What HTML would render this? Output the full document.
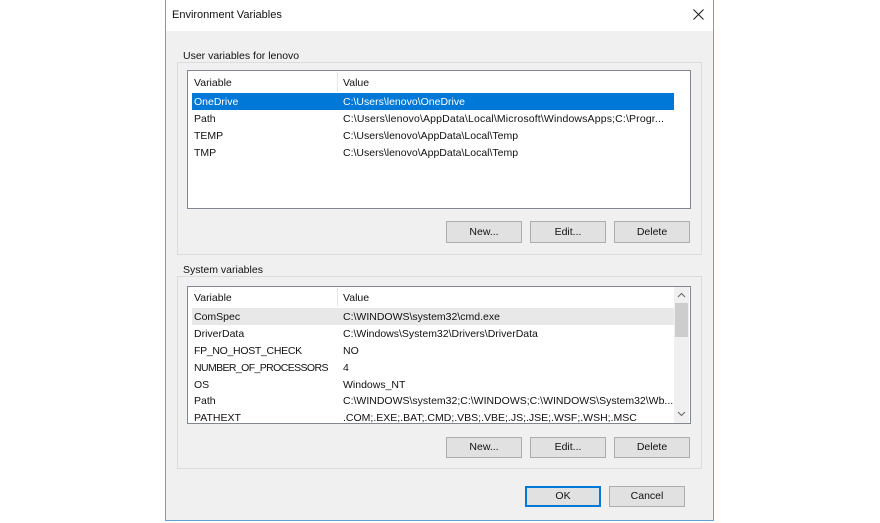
<!DOCTYPE html>
<html><head><meta charset="utf-8"><style>
*{margin:0;padding:0;box-sizing:border-box}
body{width:880px;height:523px;background:#fff;position:relative;overflow:hidden;font-family:"Liberation Sans",sans-serif;font-size:10.5px;color:#111}
.a{position:absolute;white-space:nowrap}
.win{position:absolute;left:165px;top:-1px;width:549px;height:522px;border:1px solid #6a9fd4;background:#f0f0f0}
.title{position:absolute;left:0;top:0;width:547px;height:31px;background:#fff}
.grp{position:absolute;border:1px solid #dcdcdc}
.lbl{position:absolute;background:#f0f0f0;padding:0 2px}
.list{position:absolute;background:#fff;border:1px solid #828790}
.btn{position:absolute;background:#e1e1e1;border:1px solid #adadad;text-align:center;font-size:10.5px}
.row{position:absolute;height:17px;line-height:19px}
</style></head><body>
<div class="win">
<div class="title"></div>
</div>
<div class="a" style="left:172px;top:9px;font-size:11px">Environment Variables</div>
<svg class="a" style="left:693px;top:9px" width="11" height="11"><path d="M0.5 0.5L10.5 10.5M10.5 0.5L0.5 10.5" stroke="#222" stroke-width="1.1"/></svg>

<div class="grp" style="left:177px;top:62px;width:525px;height:193px"></div>
<div class="a lbl" style="left:181px;top:50px">User variables for lenovo</div>
<div class="list" style="left:187px;top:70px;width:504px;height:139px"></div>
<div class="a" style="left:337px;top:72px;width:1px;height:20px;background:#e5e5e5"></div>
<div class="a" style="left:194px;top:77px">Variable</div>
<div class="a" style="left:343px;top:77px">Value</div>
<div class="a" style="left:192px;top:93px;width:482px;height:17px;background:#0078d7"></div>
<div class="row a" style="left:194px;top:93px;color:#fff">OneDrive</div>
<div class="row a" style="left:343px;top:93px;color:#fff">C:\Users\lenovo\OneDrive</div>
<div class="row a" style="left:194px;top:110px">Path</div>
<div class="row a" style="left:343px;top:110px;letter-spacing:0.15px">C:\Users\lenovo\AppData\Local\Microsoft\WindowsApps;C:\Progr...</div>
<div class="row a" style="left:194px;top:127px">TEMP</div>
<div class="row a" style="left:343px;top:127px">C:\Users\lenovo\AppData\Local\Temp</div>
<div class="row a" style="left:194px;top:144px">TMP</div>
<div class="row a" style="left:343px;top:144px">C:\Users\lenovo\AppData\Local\Temp</div>
<div class="btn" style="left:446px;top:221px;width:76px;height:22px;line-height:20px">New...</div>
<div class="btn" style="left:530px;top:221px;width:76px;height:22px;line-height:20px">Edit...</div>
<div class="btn" style="left:614px;top:221px;width:76px;height:22px;line-height:20px">Delete</div>

<div class="grp" style="left:177px;top:276px;width:525px;height:193px"></div>
<div class="a lbl" style="left:181px;top:264px">System variables</div>
<div class="list" style="left:187px;top:286px;width:504px;height:138px"></div>
<div class="a" style="left:337px;top:288px;width:1px;height:18px;background:#e5e5e5"></div>
<div class="a" style="left:674px;top:287px;width:15px;height:136px;background:#f0f0f0"></div>
<div class="a" style="left:675px;top:303px;width:13px;height:34px;background:#cdcdcd"></div>
<svg class="a" style="left:677px;top:292px" width="9" height="6"><path d="M1 5L4.5 1.5L8 5" stroke="#666" fill="none"/></svg>
<svg class="a" style="left:677px;top:411px" width="9" height="6"><path d="M1 1L4.5 4.5L8 1" stroke="#666" fill="none"/></svg>
<div class="a" style="left:194px;top:292px">Variable</div>
<div class="a" style="left:343px;top:292px">Value</div>
<div class="a" style="left:192px;top:308px;width:482px;height:17px;background:#e8e8e8"></div>
<div class="row a" style="left:194px;top:308px">ComSpec</div><div class="row a" style="left:343px;top:308px">C:\WINDOWS\system32\cmd.exe</div>
<div class="row a" style="left:194px;top:325px">DriverData</div><div class="row a" style="left:343px;top:325px">C:\Windows\System32\Drivers\DriverData</div>
<div class="row a" style="left:194px;top:342px;letter-spacing:-0.3px">FP_NO_HOST_CHECK</div><div class="row a" style="left:343px;top:342px">NO</div>
<div class="row a" style="left:194px;top:359px;letter-spacing:-0.6px">NUMBER_OF_PROCESSORS</div><div class="row a" style="left:343px;top:359px">4</div>
<div class="row a" style="left:194px;top:376px">OS</div><div class="row a" style="left:343px;top:376px">Windows_NT</div>
<div class="row a" style="left:194px;top:392px">Path</div><div class="row a" style="left:343px;top:392px">C:\WINDOWS\system32;C:\WINDOWS;C:\WINDOWS\System32\Wb...</div>
<div class="a" style="left:188px;top:409px;width:486px;height:14px;overflow:hidden">
<div class="row a" style="left:6px;top:0">PATHEXT</div><div class="row a" style="left:155px;top:0">.COM;.EXE;.BAT;.CMD;.VBS;.VBE;.JS;.JSE;.WSF;.WSH;.MSC</div></div>
<div class="btn" style="left:446px;top:437px;width:76px;height:21px;line-height:19px">New...</div>
<div class="btn" style="left:530px;top:437px;width:76px;height:21px;line-height:19px">Edit...</div>
<div class="btn" style="left:614px;top:437px;width:76px;height:21px;line-height:19px">Delete</div>

<div class="btn" style="left:525px;top:486px;width:76px;height:21px;line-height:17px;border:2px solid #0078d7">OK</div>
<div class="btn" style="left:609px;top:486px;width:76px;height:21px;line-height:19px">Cancel</div>
</body></html>
